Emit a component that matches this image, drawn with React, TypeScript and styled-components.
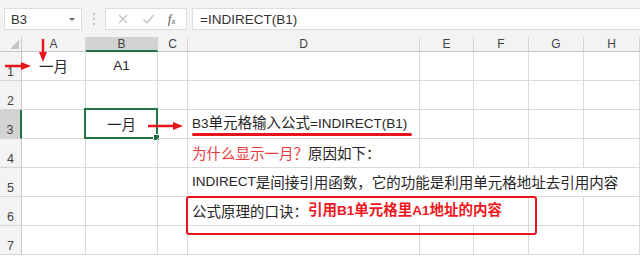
import styled, { createGlobalStyle } from 'styled-components';

const GlobalStyle = createGlobalStyle`
  html, body {
    margin: 0;
    padding: 0;
    background: #ffffff;
    overflow: hidden;
  }
  body {
    font-family: 'Noto Sans CJK SC', 'Noto Sans', sans-serif;
  }
`;

const red = '#e8141b';
const green = '#217346';
const grid = '#dadada';

const Page = styled.div`
  width: 640px;
  height: 256px;
  overflow: hidden;
`;

const Toolbar = styled.div`
  height: 37px;
  box-sizing: border-box;
  background: #f3f3f3;
  display: flex;
  align-items: flex-start;
  padding: 8px 0 0 4px;
`;

const NameBox = styled.div`
  width: 78px;
  height: 22px;
  box-sizing: border-box;
  background: #fff;
  border: 1px solid #dcdcdc;
  display: flex;
  align-items: center;
  justify-content: space-between;
  padding: 0 6px 0 6px;
  font-family: 'Liberation Sans', sans-serif;
  font-size: 13px;
  color: #333;
`;

const Caret = styled.span`
  width: 0;
  height: 0;
  border-left: 3px solid transparent;
  border-right: 3px solid transparent;
  border-top: 3px solid #666;
`;

const Dots = styled.div`
  width: 23px;
  height: 22px;
  display: flex;
  flex-direction: column;
  align-items: center;
  justify-content: center;
  gap: 3px;

  span {
    width: 2px;
    height: 2px;
    background: #c4c4c4;
  }
`;

const FxButtons = styled.div`
  width: 82px;
  height: 22px;
  box-sizing: border-box;
  background: #fff;
  border: 1px solid #dcdcdc;
  display: flex;
  align-items: center;
  justify-content: space-around;
  padding: 0 4px;
`;

const Fx = styled.span`
  font-family: 'Liberation Serif', serif;
  font-style: italic;
  font-size: 13px;
  color: #555;

  sub {
    font-size: 9px;
    vertical-align: -1px;
  }
`;

const FormulaBox = styled.div`
  flex: 1;
  height: 22px;
  margin-left: 5px;
  box-sizing: border-box;
  background: #fff;
  border: 1px solid #dcdcdc;
  border-right: none;
  display: flex;
  align-items: center;
  padding-left: 7px;
  font-family: 'Liberation Sans', sans-serif;
  font-size: 13.5px;
  color: #333;
`;

const Sheet = styled.div`
  position: relative;
  display: grid;
  grid-template-columns: 22px 64px 72px 30px 232px 54px 55px 55px 56px;
  grid-template-rows: 15px repeat(7, 29px);
`;

const Corner = styled.div`
  background: #f3f3f3;
  border-right: 1px solid #c8c8c8;
  border-bottom: 1px solid #c8c8c8;
  position: relative;

  &::after {
    content: '';
    position: absolute;
    right: 2px;
    bottom: 2px;
    border-left: 9px solid transparent;
    border-bottom: 9px solid #c3c3c3;
  }
`;

const ColHead = styled.div<{ $active?: boolean }>`
  background: ${(p) => (p.$active ? '#d3d3d3' : '#f3f3f3')};
  border-right: 1px solid #d4d4d4;
  border-bottom: ${(p) => (p.$active ? `2px solid ${green}` : '1px solid #c8c8c8')};
  display: flex;
  align-items: center;
  justify-content: center;
  font-family: 'Liberation Sans', sans-serif;
  font-size: 12px;
  color: #444;
  line-height: 12px;
`;

const RowHead = styled.div<{ $active?: boolean }>`
  background: ${(p) => (p.$active ? '#d3d3d3' : '#f3f3f3')};
  border-right: ${(p) => (p.$active ? `2px solid ${green}` : '1px solid #c8c8c8')};
  border-bottom: 1px solid #d4d4d4;
  display: flex;
  align-items: flex-end;
  justify-content: center;
  padding-bottom: 1px;
  font-family: 'Liberation Sans', sans-serif;
  font-size: 12.5px;
  color: #444;
`;

const Cell = styled.div<{ $span?: number; $align?: string }>`
  position: relative;
  grid-column: span ${(p) => p.$span || 1};
  border-right: 1px solid ${grid};
  border-bottom: 1px solid ${grid};
  display: flex;
  align-items: flex-end;
  justify-content: ${(p) => p.$align || 'flex-start'};
  padding: 0 4px 4px 4px;
  font-size: 14.5px;
  line-height: 20px;
  color: #262626;
  white-space: nowrap;
`;

/* latin runs inside CJK text: narrower face, as in the sheet's font */
const Lat = styled.span`
  font-family: 'Liberation Sans', sans-serif;
  font-size: 13.5px;
`;

const Selection = styled.div`
  position: absolute;
  left: -2px;
  top: -2px;
  right: -1px;
  bottom: -1px;
  border: 2px solid ${green};

  &::after {
    content: '';
    position: absolute;
    right: -4px;
    bottom: -4px;
    width: 5px;
    height: 5px;
    background: ${green};
    border: 1px solid #fff;
  }
`;

const Underlined = styled.span`
  position: relative;

  &::after {
    content: '';
    position: absolute;
    left: 0;
    right: -5px;
    bottom: -2px;
    height: 3px;
    border-radius: 2px;
    background: ${red};
  }
`;

const Red = styled.span<{ $bold?: boolean }>`
  color: ${(p) => (p.$bold ? '#f0161c' : '#ea3a3f')};
  font-weight: ${(p) => (p.$bold ? 700 : 400)};
`;

const Frame = styled.div`
  position: absolute;
  left: -2px;
  top: -1px;
  right: -9px;
  bottom: -10px;
  border: 2.5px solid ${red};
  border-radius: 3px;
  z-index: 2;
`;

const Arrow = styled.svg<{ $x: number; $y: number }>`
  position: absolute;
  left: ${(p) => p.$x}px;
  top: ${(p) => p.$y}px;
  z-index: 3;
  overflow: visible;
`;

function RightArrow({ x, y, len }: { x: number; y: number; len: number }) {
  return (
    <Arrow $x={x} $y={y - 5} width={len} height={10}>
      <line x1={0} y1={5} x2={len - 8} y2={5} stroke={red} strokeWidth={2.5} />
      <polygon points={`${len - 10},1 ${len},5 ${len - 10},9`} fill={red} />
    </Arrow>
  );
}

function DownArrow({ x, y, len }: { x: number; y: number; len: number }) {
  return (
    <Arrow $x={x - 5} $y={y} width={10} height={len}>
      <line x1={5} y1={0} x2={5} y2={len - 8} stroke={red} strokeWidth={2.5} />
      <polygon points={`1,${len - 10} 5,${len} 9,${len - 10}`} fill={red} />
    </Arrow>
  );
}

const cols = ['A', 'B', 'C', 'D', 'E', 'F', 'G', 'H'];

function EmptyCells({ n }: { n: number }) {
  return (
    <>
      {Array.from({ length: n }).map((_, i) => (
        <Cell key={i} />
      ))}
    </>
  );
}

export default function App() {
  return (
    <Page>
      <GlobalStyle />
      <Toolbar>
        <NameBox>
          B3
          <Caret />
        </NameBox>
        <Dots>
          <span />
          <span />
          <span />
        </Dots>
        <FxButtons>
          <svg width="12" height="12" viewBox="0 0 12 12">
            <path d="M2 2 L10 10 M10 2 L2 10" stroke="#c2c2c2" strokeWidth="1.3" />
          </svg>
          <svg width="13" height="12" viewBox="0 0 13 12">
            <path d="M1.5 6.5 L5 10 L11.5 2" stroke="#c2c2c2" strokeWidth="1.3" fill="none" />
          </svg>
          <Fx>
            f<sub>x</sub>
          </Fx>
        </FxButtons>
        <FormulaBox>=INDIRECT(B1)</FormulaBox>
      </Toolbar>

      <Sheet>
        <Corner />
        {cols.map((c) => (
          <ColHead key={c} $active={c === 'B'}>
            {c}
          </ColHead>
        ))}

        <RowHead>1</RowHead>
        <Cell $align="center">一月</Cell>
        <Cell $align="center">
          <Lat>A1</Lat>
        </Cell>
        <EmptyCells n={6} />

        <RowHead>2</RowHead>
        <EmptyCells n={8} />

        <RowHead $active>3</RowHead>
        <Cell />
        <Cell $align="center">
          一月
          <Selection />
        </Cell>
        <Cell />
        <Cell>
          <Underlined>
            <Lat>B3</Lat>单元格输入公式<Lat>=INDIRECT(B1)</Lat>
          </Underlined>
        </Cell>
        <EmptyCells n={4} />

        <RowHead>4</RowHead>
        <EmptyCells n={3} />
        <Cell>
          <Red>为什么显示一月？</Red>原因如下：
        </Cell>
        <EmptyCells n={4} />

        <RowHead>5</RowHead>
        <EmptyCells n={3} />
        <Cell $span={5}>
          <Lat>INDIRECT</Lat>是间接引用函数，它的功能是利用单元格地址去引用内容
        </Cell>

        <RowHead>6</RowHead>
        <EmptyCells n={3} />
        <Cell $span={3}>
          公式原理的口诀：
          <Red $bold>
            引用<Lat>B1</Lat>单元格里<Lat>A1</Lat>地址的内容
          </Red>
          <Frame />
        </Cell>
        <EmptyCells n={2} />

        <RowHead>7</RowHead>
        <EmptyCells n={8} />

        <RightArrow x={5} y={29} len={26} />
        <DownArrow x={43} y={2} len={23} />
        <RightArrow x={148} y={89} len={35} />
      </Sheet>
    </Page>
  );
}
